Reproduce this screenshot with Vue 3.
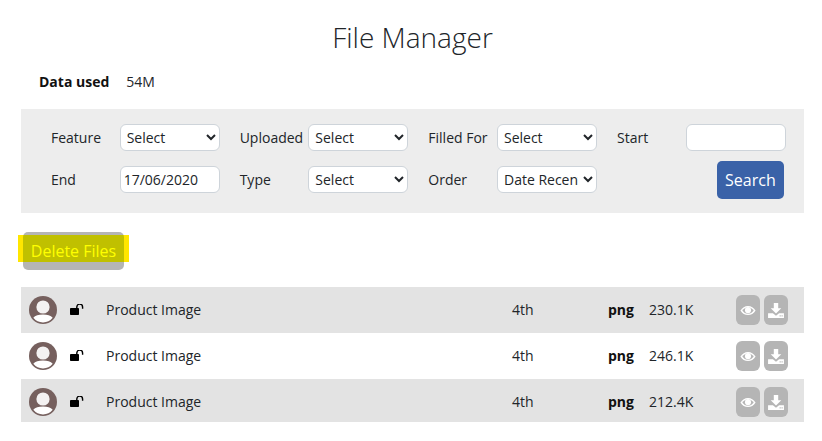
<script setup>
const fieldsTop = [
  { label: 'Feature', value: 'Select' },
  { label: 'Uploaded', value: 'Select' },
  { label: 'Filled For', value: 'Select' }
]
const fieldsBottom = [
  { label: 'Type', value: 'Select' },
  { label: 'Order', value: 'Date Recent' }
]
const rows = [
  { size: '230.1K' },
  { size: '246.1K' },
  { size: '212.4K' }
]
</script>

<template>
  <div class="page">
    <h1 class="title">File Manager</h1>
    <div class="usage"><b>Data used</b><span>54M</span></div>
    <form class="filters" @submit.prevent>
      <div v-for="f in fieldsTop" :key="f.label" class="field">
        <label>{{ f.label }}</label>
        <select class="control"><option>{{ f.value }}</option></select>
      </div>
      <div class="field">
        <label>Start</label>
        <input class="control text" />
      </div>
      <div class="field">
        <label>End</label>
        <input class="control text" value="17/06/2020" />
      </div>
      <div v-for="f in fieldsBottom" :key="f.label" class="field">
        <label>{{ f.label }}</label>
        <select class="control"><option>{{ f.value }}</option></select>
      </div>
      <div class="field end"><button class="search">Search</button></div>
    </form>
    <div class="actions">
      <span class="marker"></span>
      <button class="delete">Delete Files</button>
    </div>
    <div class="list">
      <div v-for="r in rows" :key="r.size" class="row">
        <svg class="avatar" viewBox="0 0 28 28">
          <circle cx="14" cy="14" r="14" fill="#76605e" />
          <circle cx="14" cy="11" r="6.600" fill="#f4f2f2" />
          <path d="M14 18.600c4.300 0 7.800 1.200 9.700 3.200A12.400 12.400 0 0 1 14 26.400a12.400 12.400 0 0 1-9.700-4.600c1.900-2 5.400-3.200 9.700-3.200z" fill="#fff" />
        </svg>
        <svg class="lock" viewBox="0 0 14 11">
          <path d="M6.800 4.500V3a2.900 2.900 0 0 1 5.800 0v1.800" fill="none" stroke="#000" stroke-width="1.400" />
          <rect x="0" y="4" width="9" height="7" rx="0.800" fill="#000" />
        </svg>
        <span class="name">Product Image</span>
        <span class="ord">4th</span>
        <b class="ext">png</b>
        <span class="size">{{ r.size }}</span>
        <span class="tool">
          <svg viewBox="0 0 18 12" width="16" height="11">
            <path d="M0.500 6C2.500 2.600 5.500 0.800 9 0.800s6.500 1.800 8.500 5.200c-2 3.400-5 5.200-8.500 5.200S2.500 9.400 0.500 6z" fill="#fff" />
            <path d="M2.600 6C4.200 3.800 6.300 2.300 9 2.300c2.700 0 4.800 1.500 6.400 3.700-1.600 2.200-3.700 3.700-6.400 3.700C6.300 9.700 4.200 8.200 2.600 6z" fill="#b5b5b5" />
            <circle cx="9" cy="5.600" r="3.400" fill="#fff" />
          </svg>
        </span>
        <span class="tool">
          <svg viewBox="0 0 18 17" width="16" height="15">
            <path d="M6.500 0h5v6h3.500L9 12 3 6h3.500z" fill="#fff" />
            <path d="M0 11.500h5.500L9 14.500l3.500-3H18V17H0z" fill="#fff" />
            <rect x="13" y="14" width="1.500" height="1.200" fill="#b5b5b5" />
            <rect x="15.200" y="14" width="1.500" height="1.200" fill="#b5b5b5" />
          </svg>
        </span>
      </div>
    </div>
  </div>
</template>

<style>
html, body { margin: 0; background: #fff; }
</style>

<style scoped>
.page {
  width: 822px;
  height: 441px;
  overflow: hidden;
  font-family: "Open Sans", sans-serif;
  font-size: 14px;
  color: #212529;
  box-sizing: border-box;
  padding: 0 18px 0 21px;
}
.title {
  margin: 0;
  padding-top: 18px;
  height: 39px;
  font-size: 28px;
  line-height: 38px;
  font-weight: 300;
  text-align: center;
  color: #212529;
}
.usage {
  margin-top: 14px;
  padding-left: 18px;
  height: 38px;
  line-height: 22px;
  display: flex;
  gap: 17px;
}
.usage b { font-weight: 700; color: #111; }
.filters {
  background: #ededed;
  height: 104px;
  box-sizing: border-box;
  padding: 15px 0 0 30px;
  display: grid;
  grid-template-columns: repeat(4, 188.67px);
  grid-auto-rows: 42px;
  align-content: start;
}
.field {
  display: flex;
  align-items: flex-start;
  height: 27px;
}
.field label {
  width: 68.67px;
  flex: none;
  line-height: 27px;
}
.control {
  width: 100px;
  height: 27px;
  box-sizing: border-box;
  border: 1px solid #ced4da;
  border-radius: 6px;
  background-color: #fff;
  font-family: inherit;
  font-size: 14px;
  color: #212529;
  padding: 0 2px;
  margin: 0;
  outline: none;
}
.control.text { padding: 0 3px; }
.end { justify-content: flex-end; padding-right: 21.7px; }
.search {
  width: 67px;
  height: 38px;
  margin: -5px 0 0 0;
  border: 0;
  border-radius: 5px;
  background: #3a62a8;
  color: #fff;
  font-family: inherit;
  font-size: 16px;
  padding: 0;
}
.actions {
  position: relative;
  height: 74px;
  padding: 19px 0 0 2px;
  box-sizing: border-box;
}
.delete {
  position: relative;
  display: block;
  width: 101px;
  height: 38px;
  border: 0;
  border-radius: 5px;
  background: linear-gradient(#b5b5b5 3px, #c0c000 3px, #c0c000 30px, #b5b5b5 30px);
  color: #ffff00;
  font-family: inherit;
  font-size: 16px;
  padding: 0;
}
.marker {
  position: absolute;
  left: -3px;
  top: 22px;
  width: 111px;
  height: 27px;
  background: #ffe600;
}
.row {
  height: 46px;
  display: flex;
  align-items: flex-start;
  padding-left: 8px;
  background: #e3e3e3;
  line-height: 46px;
}
.row:nth-child(2) { background: #fff; }
.row:nth-child(3) { height: 43px; }
.avatar { width: 28px; height: 28px; flex: none; margin-top: 9px; }
.lock { width: 14px; height: 11px; flex: none; margin: 17px 0 0 13px; }
.name { margin-left: 22px; width: 406px; flex: none; }
.ord { width: 96px; flex: none; }
.ext { width: 41px; flex: none; font-weight: 700; color: #111; }
.size { width: 87px; flex: none; }
.tool {
  width: 24px;
  height: 30px;
  margin: 8px 4px 0 0;
  flex: none;
  border-radius: 6px;
  background: #b5b5b5;
  display: flex;
  align-items: center;
  justify-content: center;
}
</style>
